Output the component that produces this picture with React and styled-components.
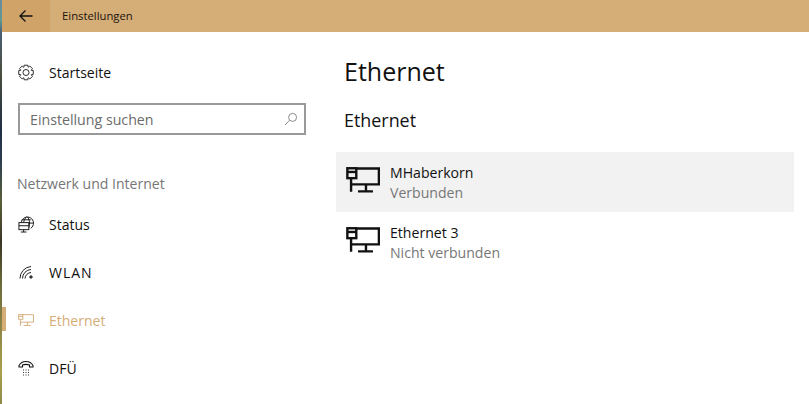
import React from "react";
import styled, { createGlobalStyle } from "styled-components";

const Global = createGlobalStyle`
  html, body { margin: 0; padding: 0; background: #fff; }
  body { font-family: "Open Sans", "Noto Sans", "Liberation Sans", sans-serif; }
`;

const Screen = styled.div`
  width: 809px; height: 404px; display: flex; overflow: hidden; background: #fff;
`;
const DesktopEdge = styled.div`
  width: 2px; flex: none;
  background: linear-gradient(180deg, #6c8aa0 0%, #5f9a92 5%, #4a5f75 8%, #4a4f3e 18%, #1f2f44 32%, #2c3f50 40%, #5a5f38 50%, #3a3526 60%, #6a6a3a 70%, #8a8244 80%, #a8a04c 92%, #8f8a48 100%);
`;
const Window = styled.div`
  flex: 1; min-width: 0; display: flex; flex-direction: column;
`;
const TitleBar = styled.header`
  height: 32px; flex: none; display: flex; align-items: center; background: #d5ad77;
  font-size: 11.3px; color: #1a140c;
`;
const BackButton = styled.div`
  width: 48px; height: 32px; display: flex; align-items: center; justify-content: center; background: #d0a368;
`;
const TitleText = styled.span`
  margin-left: 12px; margin-top: -1px;
`;
const Body = styled.div`
  flex: 1; display: flex; min-height: 0;
`;
const Sidebar = styled.nav`
  width: 334px; flex: none; display: flex; flex-direction: column;
`;
const HomeRow = styled.div`
  height: 48px; margin-top: 16px; display: flex; align-items: center; padding-left: 16px; gap: 15px;
  font-size: 14px; color: #111;
`;
const IconSlot = styled.span`
  width: 16px; height: 16px; display: flex; align-items: center; justify-content: center; flex: none;
`;
const Search = styled.div`
  width: 288px; height: 32px; margin: 7px 0 0 16px; box-sizing: border-box;
  border: 2px solid #999; display: flex; align-items: center; justify-content: space-between;
  padding: 0 6px 0 10px; font-size: 14.2px; color: #6b6b6b;
`;
const Group = styled.div`
  margin: 40px 0 0 15px; height: 18px; line-height: 18px; font-size: 14.05px; color: #767676;
`;
const NavList = styled.div`
  margin-top: 7px; display: flex; flex-direction: column;
`;
const NavRow = styled.div`
  height: 48px; display: flex; align-items: center; padding-left: 16px; gap: 15px; position: relative;
  font-size: 14px; color: ${p => (p.$active ? "#d5ad77" : "#111")};
  ${p => p.$active && `&::before { content: ""; position: absolute; left: 0; top: 11px; width: 4px; height: 24px; background: #d5ad77; }`}
`;
const WideLabel = styled.span`
  letter-spacing: 1px;
`;
const Content = styled.main`
  flex: 1; min-width: 0; padding: 0 15px 0 0;
`;
const Heading = styled.h1`
  margin: 19px 0 0 8px; height: 40px; line-height: 40px; font-size: 25px; font-weight: 400; color: #111;
`;
const SubHeading = styled.h2`
  margin: 15px 0 0 8px; height: 28px; line-height: 28px; font-size: 17.9px; font-weight: 400; color: #111;
`;
const List = styled.div`
  margin-top: 18px; display: flex; flex-direction: column;
`;
const Item = styled.div`
  height: 60px; box-sizing: border-box; padding: 11px 0 0 10px; display: flex; gap: 10px;
  background: ${p => (p.$selected ? "#f2f2f2" : "transparent")};
`;
const ItemIcon = styled.span`
  margin-top: 4px; width: 34px; height: 26px; flex: none; display: block;
`;
const ItemText = styled.div`
  display: flex; flex-direction: column;
`;
const ItemName = styled.span`
  font-size: 14.1px; line-height: 20px; color: #111;
`;
const ItemState = styled.span`
  font-size: 14.1px; line-height: 19px; color: #777;
`;

const Back = () => (
  <svg width="16" height="14" viewBox="0 0 16 14" fill="none" stroke="#111" strokeWidth="1.3">
    <path d="M2 7H14.500M7.500 1.500L2 7l5.500 5.500" />
  </svg>
);

const gearPath = (() => {
  const lobes = 8;
  const outer = 8;
  const inner = 6.1;
  let d = "";
  for (let i = 0; i < lobes; i++) {
    const a0 = ((i - 0.32) * 2 * Math.PI) / lobes;
    const a1 = ((i + 0.32) * 2 * Math.PI) / lobes;
    const a2 = ((i + 0.68) * 2 * Math.PI) / lobes;
    const pt = (r, a) => `${(8.5 + r * Math.cos(a)).toFixed(2)} ${(8.5 + r * Math.sin(a)).toFixed(2)}`;
    d += `${i === 0 ? "M" : "L"}${pt(outer, a0)} L${pt(outer, a1)} L${pt(inner, a1 + 0.12)} L${pt(inner, a2 - 0.12)} `;
  }
  return d + "Z";
})();

const Gear = () => (
  <svg width="17" height="17" viewBox="0 0 17 17" fill="none" stroke="#222" strokeWidth="1">
    <circle cx="8.500" cy="8.500" r="3.200" />
    <path d={gearPath} />
  </svg>
);

const Magnifier = () => (
  <svg width="14" height="14" viewBox="0 0 14 14" fill="none" stroke="#8a8a8a" strokeWidth="1">
    <circle cx="8.600" cy="5.400" r="4" />
    <path d="M5.700 8.200L1 13" />
  </svg>
);

const GlobeMonitor = () => (
  <svg width="17" height="17" viewBox="0 0 17 17" fill="none" stroke="#111" strokeWidth="1">
    <path d="M3.500 6.500A6.500 6.500 0 1 1 13.500 12.500" />
    <path d="M4 3.500h9.500M8.500 7h7.500M9 .5C7 2 6.300 4.300 6 6.500M10 .5c2.500 2.500 3 6.500 1.500 11.500" />
    <rect x="1" y="6.500" width="10.500" height="7.500" fill="#fff" />
    <path d="M1 9.800h10.500M6 14v2.500M3 16.500h6" />
  </svg>
);

const Wifi = () => (
  <svg width="14" height="14" viewBox="0 0 14 14" fill="none" stroke="#222" strokeWidth="1">
    <path d="M1 13.500A12 12 0 0 1 12 1.500" />
    <path d="M3.500 13.500A9 9 0 0 1 12 4.500" />
    <path d="M6 13.500A6.500 6.500 0 0 1 12 7.500" />
    <path d="M10.300 12h3.400M12 10.300v3.400" strokeWidth="1.300" />
  </svg>
);

const Monitor = ({ color, width, weight }) => (
  <svg width={width} height={width * 0.76} viewBox="0 0 34 26" fill="none" stroke={color} strokeWidth={weight} style={{ display: "block" }}>
    <path d="M10 1.500H33V17.500H5" />
    <rect x="1.250" y="1.250" width="9" height="10" />
    <path d="M1 5h9.500" />
    <path d="M5 11.500V25M4 21.500h2" />
    <path d="M20 17.500v6.500M12 24.500h15" />
  </svg>
);

const Phone = () => (
  <svg width="16" height="16" viewBox="0 0 16 16" fill="none" stroke="#111" strokeWidth="1.100">
    <path d="M1 7V5.500C2.500 2.800 5 1.500 8 1.500s5.500 1.300 7 4V7h-3.500V5c-2-.7-5-.7-7 0v2z" />
    <g strokeWidth="1.100" stroke="#333">
      <path d="M5 10h1M7.500 10h1M10 10h1M5 12.500h1M7.500 12.500h1M10 12.500h1M5 15h1M7.500 15h1M10 15h1" />
    </g>
  </svg>
);

export default function App() {
  return (
    <Screen>
      <Global />
      <DesktopEdge />
      <Window>
        <TitleBar>
          <BackButton><Back /></BackButton>
          <TitleText>Einstellungen</TitleText>
        </TitleBar>
        <Body>
          <Sidebar>
            <HomeRow>
              <IconSlot><Gear /></IconSlot>
              Startseite
            </HomeRow>
            <Search>
              Einstellung suchen
              <Magnifier />
            </Search>
            <Group>Netzwerk und Internet</Group>
            <NavList>
              <NavRow>
                <IconSlot><GlobeMonitor /></IconSlot>
                Status
              </NavRow>
              <NavRow>
                <IconSlot><Wifi /></IconSlot>
                <WideLabel>WLAN</WideLabel>
              </NavRow>
              <NavRow $active>
                <IconSlot><Monitor color="#d5ad77" width={16} weight={2} /></IconSlot>
                Ethernet
              </NavRow>
              <NavRow>
                <IconSlot><Phone /></IconSlot>
                DFÜ
              </NavRow>
            </NavList>
          </Sidebar>
          <Content>
            <Heading>Ethernet</Heading>
            <SubHeading>Ethernet</SubHeading>
            <List>
              <Item $selected>
                <ItemIcon><Monitor color="#111" width={34} weight={2.400} /></ItemIcon>
                <ItemText>
                  <ItemName>MHaberkorn</ItemName>
                  <ItemState>Verbunden</ItemState>
                </ItemText>
              </Item>
              <Item>
                <ItemIcon><Monitor color="#111" width={34} weight={2.400} /></ItemIcon>
                <ItemText>
                  <ItemName>Ethernet 3</ItemName>
                  <ItemState>Nicht verbunden</ItemState>
                </ItemText>
              </Item>
            </List>
          </Content>
        </Body>
      </Window>
    </Screen>
  );
}
